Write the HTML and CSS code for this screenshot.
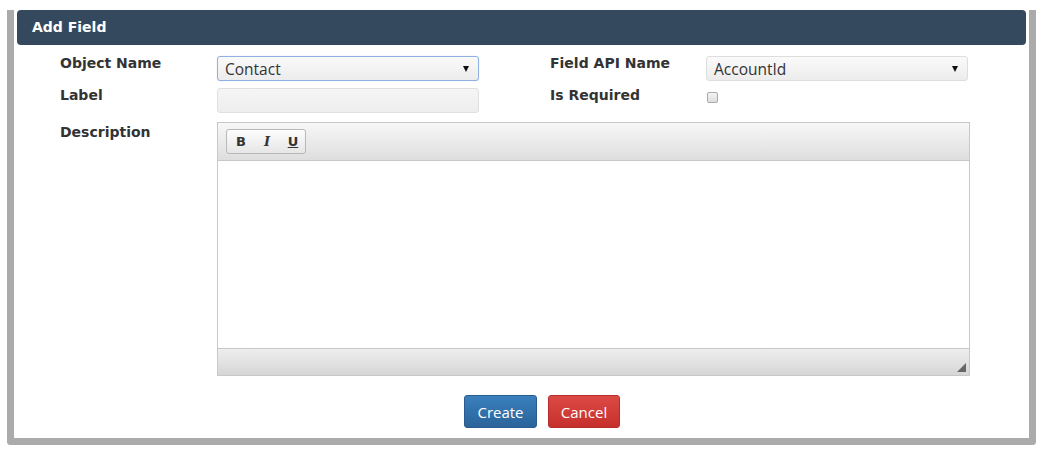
FILE: index.html
```html
<!DOCTYPE html>
<html lang="en">
<head>
  <meta charset="UTF-8">
  <title>Add Field</title>
  <link rel="stylesheet" href="styles.css">
</head>
<body>
  <div class="panel">
    <div class="panel-head">Add Field</div>

    <div class="form">
      <div class="lbl">Object Name</div>
      <div class="select focus"><span>Contact</span><i class="caret"></i></div>
      <div></div>
      <div class="lbl">Field API Name</div>
      <div class="select"><span>AccountId</span><i class="caret"></i></div>

      <div class="lbl">Label</div>
      <div class="input"></div>
      <div></div>
      <div class="lbl">Is Required</div>
      <div><input type="checkbox" class="check"></div>

      <div class="lbl desc">Description</div>
      <div class="editor">
        <div class="toolbar">
          <div class="btn-group">
            <span class="tb b">B</span>
            <span class="tb i">I</span>
            <span class="tb u">U</span>
          </div>
        </div>
        <div class="area"></div>
        <div class="status"><i class="grip"></i></div>
      </div>
    </div>

    <div class="actions">
      <button class="btn create">Create</button>
      <button class="btn cancel">Cancel</button>
    </div>
  </div>
</body>
</html>
```

FILE: styles.css
```css
body {
  margin: 0;
  padding: 10px 0 0 7px;
  background: #fff;
  font-family: "DejaVu Sans", Verdana, sans-serif;
  color: #333;
}

.panel {
  width: 1029px;
  box-sizing: border-box;
  border: 7px solid #ababab;
  border-top: none;
  border-radius: 0 0 4px 4px;
  padding: 0 3px 10px;
}

.panel-head {
  height: 35px;
  line-height: 35px;
  background: #34495e;
  color: #fff;
  font-weight: bold;
  font-size: 14px;
  padding-left: 15px;
  border-radius: 4px;
}

.form {
  display: grid;
  grid-template-columns: 157px 262px 71px 156px 262px;
  grid-template-rows: 25px 25px auto;
  row-gap: 7px;
  padding: 11px 0 0 43px;
}

.lbl {
  font-size: 14px;
  font-weight: bold;
  line-height: 14px;
  color: #333;
}

.lbl.desc {
  margin-top: 2px;
  padding-top: 3px;
}

.select, .input {
  box-sizing: border-box;
  height: 25px;
  border: 1px solid #ddd;
  border-radius: 3px;
  background: linear-gradient(#fafafa, #ececec);
  font-family: "Open Sans", sans-serif;
  font-size: 15.5px;
  color: #333;
  display: flex;
  align-items: center;
  justify-content: space-between;
  padding: 0 9px 0 7px;
}

.select.focus {
  border-color: #8fb1e3;
  box-shadow: 0 0 1px #a8c4ee;
}

.input {
  background: linear-gradient(#f5f5f5, #eeeeee);
  border-color: #e0e0e0;
}

.caret {
  width: 0;
  height: 0;
  border-left: 3px solid transparent;
  border-right: 3px solid transparent;
  border-top: 6px solid #111;
}

.check {
  appearance: none;
  margin: 2px 0 0 1px;
  width: 11px;
  height: 11px;
  border: 1px solid #aaa;
  border-radius: 2px;
  background: linear-gradient(#f4f4f4, #ddd);
}

.editor {
  grid-column: 2 / 6;
  width: 753px;
  margin-top: 2px;
  border: 1px solid #c8c8c8;
  box-sizing: border-box;
}

.toolbar {
  height: 38px;
  background: linear-gradient(#f7f7f7, #dedede);
  border-bottom: 1px solid #c8c8c8;
  padding: 6px 0 0 8px;
  box-sizing: border-box;
}

.btn-group {
  display: inline-flex;
  height: 25px;
  box-sizing: border-box;
  border: 1px solid #b8b8b8;
  border-radius: 3px;
  background: linear-gradient(#fdfdfd, #e6e6e6);
  padding: 0 6px 0 8px;
  align-items: center;
  gap: 14px;
}

.tb {
  font-size: 13px;
  font-weight: bold;
  color: #333;
  width: 12px;
  text-align: center;
}

.tb.i { font-style: italic; font-family: "DejaVu Serif", serif; }
.tb.u { text-decoration: underline; }

.area {
  height: 187px;
  background: #fff;
}

.status {
  height: 26px;
  background: linear-gradient(#eeeeee, #d6d6d6);
  border-top: 1px solid #c8c8c8;
  position: relative;
}

.grip {
  position: absolute;
  right: 3px;
  bottom: 3px;
  width: 0;
  height: 0;
  border-left: 9px solid transparent;
  border-bottom: 9px solid #666;
}

.actions {
  display: flex;
  justify-content: center;
  gap: 11px;
  margin: 19px 0 0 41px;
}

.btn {
  height: 33px;
  padding: 0;
  border-radius: 3px;
  font-family: "Open Sans", sans-serif;
  font-size: 15px;
  color: #fff;
  cursor: pointer;
}

.create {
  width: 73px;
  background: linear-gradient(#3a80bd, #2a6399);
  border: 1px solid #2a5c8f;
}

.cancel {
  width: 72px;
  background: linear-gradient(#dc4a46, #c6302c);
  border: 1px solid #b62c28;
}
```
